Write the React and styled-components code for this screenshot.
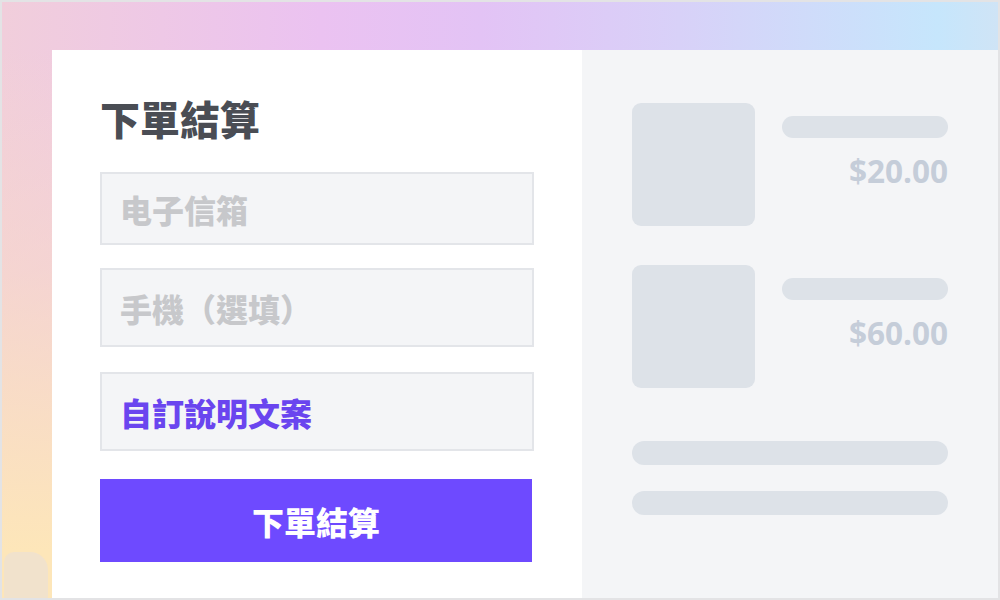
import React from "react";
import styled, { createGlobalStyle } from "styled-components";

const Global = createGlobalStyle`
  html, body { margin: 0; padding: 0; background: #ffffff; }
  * { box-sizing: border-box; }
`;

const Frame = styled.div`
  position: relative;
  width: 1000px;
  height: 600px;
  border: 2px solid #e3e3e5;
  padding: 48px 0 0 50px;
  background:
    linear-gradient(180deg, rgba(253, 229, 186, 0) 8%, rgba(248, 218, 200, 0.55) 45%, rgba(253, 230, 185, 1) 92%),
    linear-gradient(90deg, #f1cedb 0%, #ebc2f1 32%, #e3c3f5 48%, #d8d1f8 68%, #c6e6fc 94%, #cfe4f6 100%);
  overflow: hidden;
  &::before {
    content: "";
    position: absolute;
    left: 2px;
    bottom: 0;
    width: 44px;
    height: 46px;
    background: #f1e2cc;
    border-top-right-radius: 18px;
    border-top-left-radius: 10px;
  }
`;

const Card = styled.div`
  position: relative;
  display: grid;
  grid-template-columns: 530px 1fr;
  height: 100%;
`;

const FormPanel = styled.div`
  background: #ffffff;
  padding: 48px 48px 0 48px;
  display: flex;
  flex-direction: column;
`;

const Title = styled.h1`
  margin: 0 0 34px;
  font-family: "Noto Sans CJK TC", "Noto Sans", sans-serif;
  font-weight: 900;
  font-size: 40px;
  line-height: 40px;
  color: #4a4d54;
`;

const Field = styled.div`
  height: ${(p) => p.$h}px;
  margin-top: ${(p) => p.$mt || 0}px;
  border: 2px solid #e3e5e9;
  background: #f4f5f7;
  display: flex;
  align-items: center;
  padding: 0 18px;
  font-family: "Noto Sans CJK TC", "Noto Sans", sans-serif;
  font-weight: 900;
  font-size: 32px;
  line-height: 1;
  color: ${(p) => (p.$accent ? "#6a45ef" : "#c7c8cb")};
`;

const SubmitButton = styled.button`
  height: 83px;
  width: 432px;
  margin-top: 28px;
  border: none;
  background: #6e4aff;
  color: #ffffff;
  font-family: "Noto Sans CJK TC", "Noto Sans", sans-serif;
  font-weight: 900;
  font-size: 32px;
  line-height: 1;
  display: flex;
  align-items: center;
  justify-content: center;
  padding: 0;
`;

const SummaryPanel = styled.div`
  background: #f4f5f7;
  padding: 53px 50px 0 50px;
  display: flex;
  flex-direction: column;
`;

const Item = styled.div`
  display: flex;
  gap: 27px;
  margin-bottom: ${(p) => p.$mb}px;
`;

const Thumb = styled.div`
  width: 123px;
  height: 123px;
  flex: none;
  border-radius: 9px;
  background: #dde2e8;
`;

const ItemInfo = styled.div`
  flex: 1;
  padding-top: 13px;
  display: flex;
  flex-direction: column;
  align-items: stretch;
`;

const Bar = styled.div`
  height: ${(p) => p.$h}px;
  border-radius: 12px;
  background: #dde2e8;
  margin-bottom: ${(p) => p.$mb || 0}px;
`;

const Price = styled.div`
  margin-top: 17px;
  text-align: right;
  font-family: "Open Sans", "Liberation Sans", sans-serif;
  font-weight: 700;
  font-size: 31.5px;
  line-height: 32px;
  color: #c5cdd9;
`;

export default function App() {
  return (
    <>
      <Global />
      <Frame>
        <Card>
          <FormPanel>
            <Title>下單結算</Title>
            <Field $h={73}>电子信箱</Field>
            <Field $h={79} $mt={23}>手機（選填）</Field>
            <Field $h={79} $mt={25} $accent>自訂說明文案</Field>
            <SubmitButton>下單結算</SubmitButton>
          </FormPanel>
          <SummaryPanel>
            <Item $mb={39}>
              <Thumb />
              <ItemInfo>
                <Bar $h={22} />
                <Price>$20.00</Price>
              </ItemInfo>
            </Item>
            <Item $mb={53}>
              <Thumb />
              <ItemInfo>
                <Bar $h={22} />
                <Price>$60.00</Price>
              </ItemInfo>
            </Item>
            <Bar $h={24} $mb={26} />
            <Bar $h={24} />
          </SummaryPanel>
        </Card>
      </Frame>
    </>
  );
}
